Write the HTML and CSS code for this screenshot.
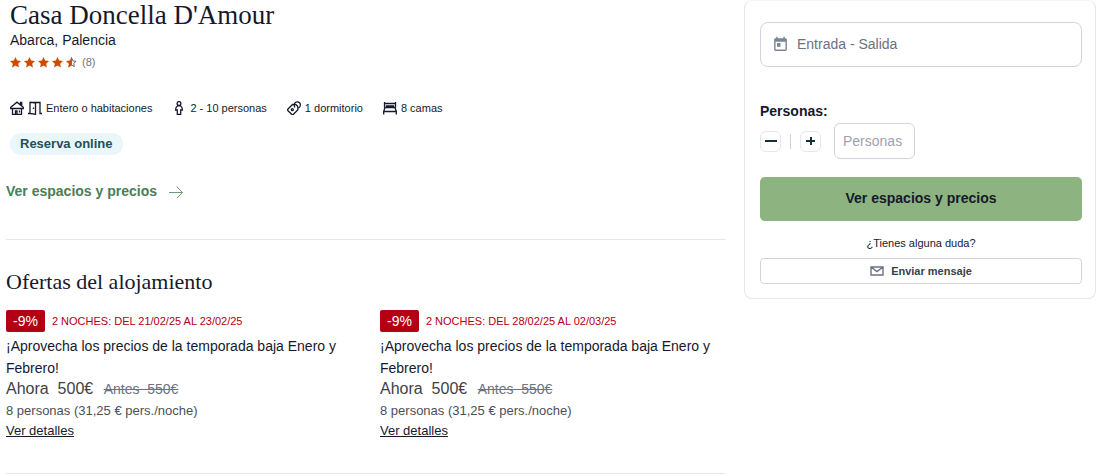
FILE: index.html
```
<!DOCTYPE html>
<html lang="es">
<head>
    <meta charset="UTF-8">
    <meta name="viewport" content="width=device-width, initial-scale=1.0">
    <title>Casa Doncella D'Amour</title>
    <link rel="stylesheet" href="styles.css">
</head>
<body>

    <svg width="0" height="0" class="sprite" aria-hidden="true">
        <symbol id="star" viewBox="0 0 24 24">
            <path d="M12 0l3.600 7.800 8.400 1-6.200 5.800 1.700 8.400-7.500-4.200L4.500 23l1.700-8.400L0 8.800l8.400-1z"/>
        </symbol>
    </svg>

    <div class="page">
        <main class="content">
            <header class="intro">
                <h1>Casa Doncella D'Amour</h1>
                <p class="location">Abarca, Palencia</p>
                <div class="rating">
                    <svg class="star"><use href="#star"/></svg>
                    <svg class="star"><use href="#star"/></svg>
                    <svg class="star"><use href="#star"/></svg>
                    <svg class="star"><use href="#star"/></svg>
                    <svg class="star" viewBox="0 0 24 24">
                        <path d="M13 0v18.500L4.500 23l1.700-8.400L0 8.800l8.400-1L12 0z"/>
                        <path class="star-empty" d="M13 3l2 5.700 7 .8-5.200 4.700 1.500 6.800-5.300-3"/>
                    </svg>
                    <span class="votes">(8)</span>
                </div>

                <ul class="features">
                    <li>
                        <svg class="icon" viewBox="0 0 14 14">
                            <path d="M.7 7.500V6.300L7 1.200l6.300 5.100v1.200zM2.500 7.500v5.800h9V7.500M10.500 3.500V1.500h1.200v3M5.500 13V10h1.500v3M9.500 9.500v2"/>
                        </svg>
                        <svg class="icon" viewBox="0 0 14 14">
                            <path d="M0 12.500h2V1.500h10v11h2M7.500 1.500v11M2.500 1.200l5 .8v11.300l-5-.8M5.500 6.500v1.500"/>
                        </svg>
                        <span>Entero o habitaciones</span>
                    </li>
                    <li>
                        <svg class="icon" viewBox="0 0 14 14">
                            <circle cx="7" cy="2.500" r="1.900"/>
                            <path d="M5.500 4.800h3c1.200.8 1.900 2.200 1.900 4.200H8.700v4.300H5.300V9H3.600c0-2 .7-3.400 1.900-4.200z"/>
                        </svg>
                        <span>2 - 10 personas</span>
                    </li>
                    <li>
                        <svg class="icon" viewBox="0 0 14 14">
                            <path d="M1 8l4.500-4.500 3.500.2 1.700 1.600.2 3.500-4.400 4.400c-.6.600-1.200.6-1.800 0L1 9.800c-.5-.6-.5-1.200 0-1.800z"/>
                            <path d="M7.800 6.500C6.500 4 7.500 1 10 .8c2.200-.1 3.600 1.500 3.300 3.400-.1 1.400-.8 2.300-1.900 2.900"/>
                            <circle cx="5.300" cy="8.700" r="1"/>
                        </svg>
                        <span>1 dormitorio</span>
                    </li>
                    <li>
                        <svg class="icon" viewBox="0 0 14 14">
                            <path d="M1.500 1v5.500M12.500 1v5.500M1.500 2.500h11M3.500 6.500v-1.500h7v1.500M2 6.500h10L13.300 10.500H.7zM.7 10.500v3M13.300 10.500v3"/>
                        </svg>
                        <span>8 camas</span>
                    </li>
                </ul>

                <span class="tag">Reserva online</span>
            </header>

            <a href="#ofertas" class="spaces-link">
                Ver espacios y precios
                <svg class="arrow" viewBox="0 0 14 14"><path d="M0 8.500h13.300M7.500 2.500l6 6-5.500 5.500"/></svg>
            </a>

            <section id="ofertas" class="offers">
                <h2>Ofertas del alojamiento</h2>
                <div class="offer-list">
                    <article class="offer">
                        <div class="offer-head">
                            <span class="discount">-9%</span>
                            <span class="dates">2 NOCHES: DEL 21/02/25 AL 23/02/25</span>
                        </div>
                        <h3>¡Aprovecha los precios de la temporada baja Enero y Febrero!</h3>
                        <p class="price">Ahora&nbsp; 500€ <del>Antes &nbsp;550€</del></p>
                        <p class="per-person">8 personas (31,25 € pers./noche)</p>
                        <a href="#" class="details">Ver detalles</a>
                    </article>
                    <article class="offer">
                        <div class="offer-head">
                            <span class="discount">-9%</span>
                            <span class="dates">2 NOCHES: DEL 28/02/25 AL 02/03/25</span>
                        </div>
                        <h3>¡Aprovecha los precios de la temporada baja Enero y Febrero!</h3>
                        <p class="price">Ahora&nbsp; 500€ <del>Antes &nbsp;550€</del></p>
                        <p class="per-person">8 personas (31,25 € pers./noche)</p>
                        <a href="#" class="details">Ver detalles</a>
                    </article>
                </div>
            </section>
        </main>

        <aside>
            <form class="booking">
                <label class="date-field">
                    <svg class="calendar" viewBox="0 0 24 24">
                        <path d="M19 3h-1V1h-2v2H8V1H6v2H5a2 2 0 0 0-2 2v14a2 2 0 0 0 2 2h14a2 2 0 0 0 2-2V5a2 2 0 0 0-2-2zm0 16H5V8h14v11zM7 10h5v5H7z"/>
                    </svg>
                    <input type="text" placeholder="Entrada - Salida" aria-label="Entrada - Salida">
                </label>

                <label for="people" class="people-label">Personas:</label>
                <div class="people">
                    <button type="button" class="step" aria-label="Menos">
                        <svg viewBox="0 0 12 12"><path d="M0 6h12"/></svg>
                    </button>
                    <span class="divider"></span>
                    <button type="button" class="step" aria-label="Más">
                        <svg viewBox="0 0 12 12"><path d="M1 6h9M6 2v8"/></svg>
                    </button>
                    <input type="text" id="people" placeholder="Personas">
                </div>

                <button type="submit" class="submit">Ver espacios y precios</button>

                <p class="question">¿Tienes alguna duda?</p>
                <button type="button" class="message">
                    <svg class="mail" viewBox="0 0 14 10"><path d="M1 1h12v8H1zM1 1l6 4.500L13 1"/></svg>
                    Enviar mensaje
                </button>
            </form>
        </aside>
    </div>

</body>
</html>
```
FILE: styles.css
```
* {
    box-sizing: border-box;
}

body {
    margin: 0;
    font-family: "Liberation Sans", Arial, sans-serif;
    font-size: 14px;
    line-height: 20px;
    color: #16192c;
    background-color: #fff;
}

h1, h2, h3, p, ul {
    margin: 0;
    padding: 0;
    font-weight: normal;
}

h1, h2 {
    font-family: "Liberation Serif", "Times New Roman", serif;
}

button, input {
    font-family: inherit;
    color: inherit;
}

button {
    cursor: pointer;
}

.sprite {
    display: block;
}

.page {
    display: grid;
    grid-template-columns: 1fr 352px;
    gap: 18px;
    align-items: start;
    padding-left: 6px;
}

.intro {
    padding-left: 4px;
}

h1 {
    font-size: 27px;
    line-height: 30px;
}

.rating {
    display: flex;
    align-items: center;
    gap: 3px;
    margin-top: 2px;
}

.star {
    width: 11px;
    height: 11px;
    fill: #cc4b00;
}

.star-empty {
    fill: none;
    stroke: #555b6b;
    stroke-width: 2;
}

.votes {
    margin-left: 2px;
    font-size: 11px;
    color: #6b7280;
}

.features {
    display: flex;
    gap: 20px;
    margin-top: 26px;
    list-style: none;
    font-size: 11px;
}

.features li {
    display: flex;
    align-items: center;
    gap: 4px;
}

.icon {
    width: 14px;
    height: 14px;
    fill: none;
    stroke: #16192c;
    stroke-width: 1.3;
}

.tag {
    display: inline-block;
    margin-top: 15px;
    padding: 0 10px;
    border-radius: 11px;
    font-size: 13px;
    line-height: 22px;
    font-weight: bold;
    color: #22505a;
    background-color: #eaf7fa;
}

.spaces-link {
    display: flex;
    align-items: center;
    gap: 12px;
    margin-top: 26px;
    padding-bottom: 38px;
    border-bottom: 1px solid #e5e7eb;
    font-weight: bold;
    color: #4b7d57;
    text-decoration: none;
}

.arrow {
    width: 14px;
    height: 14px;
    fill: none;
    stroke: #6d9a78;
}

.offers {
    padding-top: 30px;
    padding-bottom: 33px;
    border-bottom: 1px solid #e5e7eb;
}

h2 {
    font-size: 22px;
    line-height: 24px;
}

.offer-list {
    display: grid;
    grid-template-columns: 1fr 1fr;
    gap: 28px;
    margin-top: 16px;
}

.offer-head {
    display: flex;
    align-items: center;
    gap: 7px;
}

.discount {
    padding: 0 7px;
    border-radius: 2px;
    font-size: 14px;
    line-height: 22px;
    color: #fff;
    background-color: #b30012;
}

.dates {
    font-size: 11px;
    color: #b30012;
}

.offer h3 {
    margin-top: 3px;
    font-size: 14px;
    line-height: 22px;
}

.price {
    font-size: 16px;
    line-height: 19px;
    color: #3f4147;
}

.price del {
    margin-left: 6px;
    font-size: 14px;
    color: #6b7280;
}

.per-person {
    margin-top: 2px;
    font-size: 13px;
    color: #4b4f58;
}

.details {
    display: block;
    width: fit-content;
    font-size: 13px;
    line-height: 19px;
    color: inherit;
}

.booking {
    display: flex;
    flex-direction: column;
    padding: 21px 13px 14px 15px;
    border: 1px solid #e5e7eb;
    border-top-color: #f3f4f6;
    border-radius: 8px;
}

.date-field {
    display: flex;
    align-items: center;
    gap: 8px;
    height: 45px;
    padding: 0 12px 0 11px;
    border: 1px solid #d1d5db;
    border-radius: 8px;
}

.date-field input {
    flex: 1;
    padding: 0 0 2px;
    border: none;
    font-size: 14px;
}

.date-field input::placeholder {
    color: #6b7280;
}

.calendar {
    width: 17px;
    height: 17px;
    fill: #7c8594;
}

.people-label {
    margin-top: 34px;
    font-weight: bold;
}

.people {
    display: flex;
    align-items: center;
    gap: 9px;
    margin-top: 2px;
}

.step {
    display: flex;
    align-items: center;
    justify-content: center;
    width: 21px;
    height: 21px;
    padding: 0;
    border: 1px solid #e5e7eb;
    border-radius: 6px;
    background-color: #fff;
}

.step svg {
    width: 12px;
    height: 12px;
    stroke: #17303a;
    stroke-width: 2;
}

.divider {
    width: 1px;
    height: 15px;
    background-color: #d1d5db;
}

.people input {
    width: 81px;
    height: 36px;
    margin-left: 4px;
    padding: 0 8px;
    border: 1px solid #d1d5db;
    border-radius: 6px;
    font-size: 14px;
}

.people input::placeholder {
    color: #9ca3af;
}

.submit {
    height: 44px;
    margin-top: 18px;
    padding-bottom: 3px;
    border: none;
    border-radius: 5px;
    font-size: 14px;
    font-weight: bold;
    background-color: #8cb380;
}

.question {
    margin-top: 12px;
    font-size: 11px;
    text-align: center;
}

.message {
    display: flex;
    align-items: center;
    justify-content: center;
    gap: 7px;
    height: 26px;
    margin-top: 5px;
    border: 1px solid #d1d5db;
    border-radius: 4px;
    font-size: 11px;
    font-weight: bold;
    color: #374151;
    background-color: #fff;
}

.mail {
    width: 14px;
    height: 10px;
    fill: none;
    stroke: #6b7280;
    stroke-width: 1.4;
}
```
